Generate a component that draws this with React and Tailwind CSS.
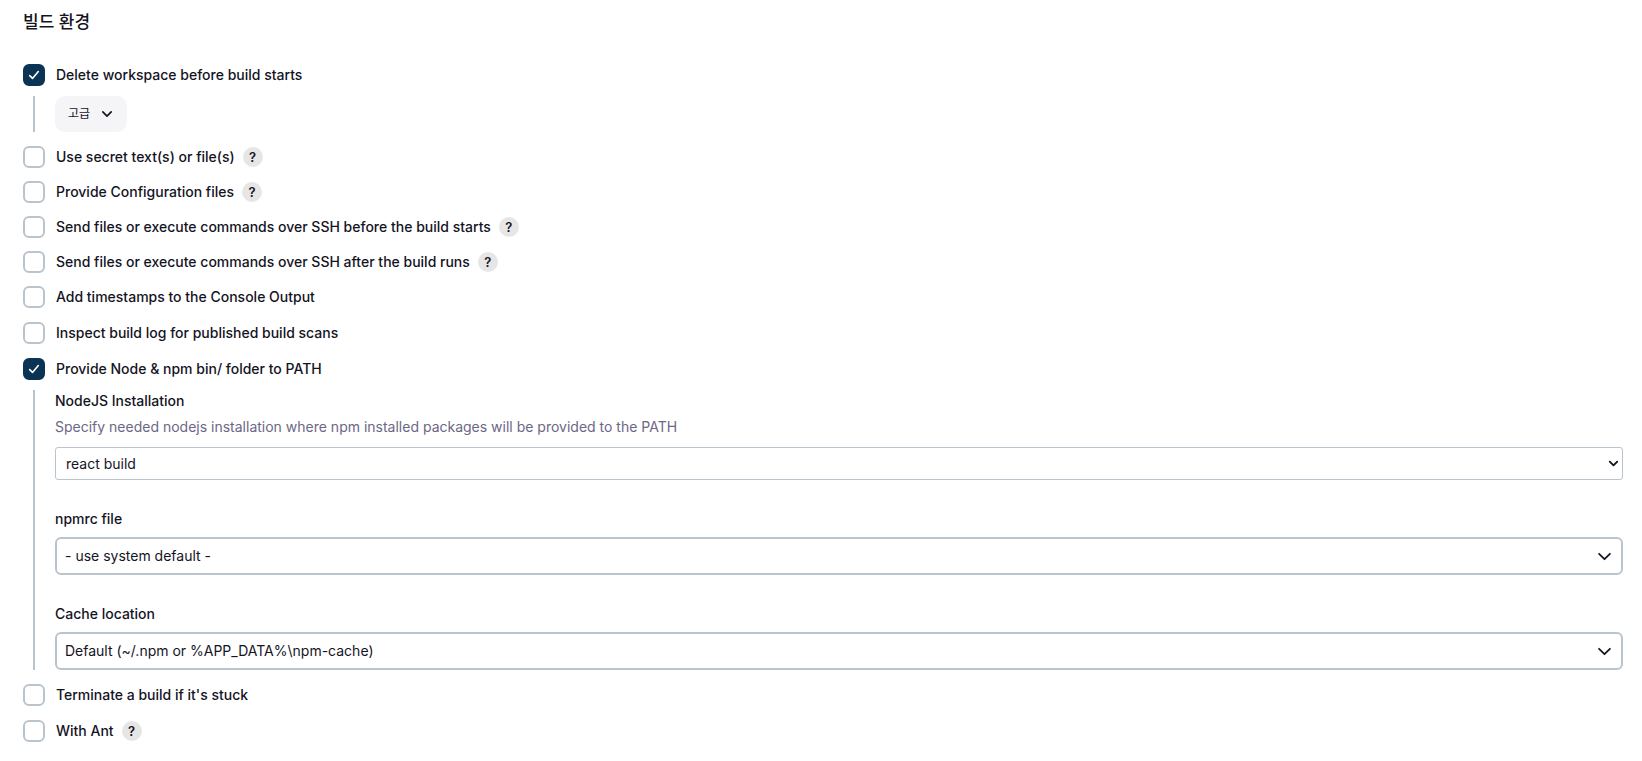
import React, { useState } from 'react';

const FONT = "font-['Inter','Noto_Sans_CJK_KR',sans-serif]";

// Options listed under the build environment section
const initialOptions = [
    { id: 'delete-workspace', label: 'Delete workspace before build starts', checked: true },
    { id: 'secret-text', label: 'Use secret text(s) or file(s)', help: true },
    { id: 'config-files', label: 'Provide Configuration files', help: true },
    { id: 'ssh-before', label: 'Send files or execute commands over SSH before the build starts', help: true },
    { id: 'ssh-after', label: 'Send files or execute commands over SSH after the build runs', help: true },
    { id: 'timestamps', label: 'Add timestamps to the Console Output' },
    { id: 'build-scans', label: 'Inspect build log for published build scans' },
    { id: 'node-path', label: 'Provide Node & npm bin/ folder to PATH', checked: true },
    { id: 'terminate', label: "Terminate a build if it's stuck" },
    { id: 'with-ant', label: 'With Ant', help: true },
];

const Chevron = ({ className }) => (
    <svg className={className} viewBox="0 0 12 12" fill="none" stroke="currentColor" strokeLinecap="round" strokeLinejoin="round">
        <path d="M1 3.5l5 5 5-5" />
    </svg>
);

const OptionRow = ({ option, onToggle }) => (
    <div className={`flex items-center h-[22px] ${option.help ? 'mb-[13px]' : 'mb-3.5'}`}>
        <label htmlFor={option.id} className="flex items-center gap-[11px] font-medium cursor-pointer">
            <span className="grid size-[22px]">
                <input
                    id={option.id}
                    type="checkbox"
                    checked={!!option.checked}
                    onChange={() => onToggle(option.id)}
                    className="col-start-1 row-start-1 appearance-none size-[22px] rounded-md border-2 border-[#bac4cd] bg-white checked:border-[#0b3454] checked:bg-[#0b3454]"
                />
                {option.checked && (
                    <svg className="col-start-1 row-start-1 size-[22px] pointer-events-none" viewBox="0 0 22 22" fill="none" stroke="white" strokeWidth="1.6" strokeLinecap="round" strokeLinejoin="round">
                        <path d="M6.7 11.6l2.8 2.8 5.8-6.8" />
                    </svg>
                )}
            </span>
            {option.label}
        </label>
        {option.help && (
            <button type="button" aria-label={`Help for ${option.label}`} className="ml-2 flex items-center justify-center size-5 rounded-full bg-[#e6e6e6] text-[13px] font-semibold">
                ?
            </button>
        )}
    </div>
);

// Nested settings with the vertical guide line on the left
const NestedPanel = ({ children }) => (
    <div className="-mt-1 mb-3.5 ml-2.5 border-l-2 border-[#bac4cd] pl-5">{children}</div>
);

const SelectField = ({ id, label, description, value, native }) => (
    <div>
        <label htmlFor={id} className="block leading-5 font-medium">{label}</label>
        {description && <p className="mt-1.5 mb-2.5 leading-5 text-[#6c6786]">{description}</p>}
        <div className={`grid items-center ${native ? '' : 'mt-2'}`}>
            <select
                id={id}
                className={`col-start-1 row-start-1 w-full appearance-none border-[#bac4cd] bg-white ${native ? 'h-[33px] rounded-[3px] border px-2.5' : 'h-[38px] rounded-md border-2 px-2'}`}
            >
                <option>{value}</option>
            </select>
            <Chevron
                className={`col-start-1 row-start-1 justify-self-end pointer-events-none ${native ? 'mr-[5px] size-[9px] stroke-[2.5]' : 'mr-3 size-[13px] stroke-[1.6]'}`}
            />
        </div>
    </div>
);

const App = () => {
    const [options, setOptions] = useState(initialOptions);

    const handleToggle = (id) => {
        setOptions(options.map((option) => (option.id === id ? { ...option, checked: !option.checked } : option)));
    };

    return (
        <section className={`min-h-screen bg-white pt-2.5 pr-[19px] pl-[23px] text-sm text-[#14141f] ${FONT}`}>
            <h2 className="mb-[30px] text-[17px] leading-6 font-medium">빌드 환경</h2>

            {options.map((option) => (
                <React.Fragment key={option.id}>
                    <OptionRow option={option} onToggle={handleToggle} />

                    {option.id === 'delete-workspace' && option.checked && (
                        <NestedPanel>
                            <button type="button" className="flex items-center gap-3 h-9 rounded-[10px] bg-[#f5f5f8] pl-[13px] pr-[15px] text-xs font-normal">
                                고급
                                <Chevron className="size-2.5 stroke-2" />
                            </button>
                        </NestedPanel>
                    )}

                    {option.id === 'node-path' && option.checked && (
                        <NestedPanel>
                            <div className="flex flex-col gap-[29px] pt-px">
                                <SelectField
                                    id="nodejs"
                                    label="NodeJS Installation"
                                    description="Specify needed nodejs installation where npm installed packages will be provided to the PATH"
                                    value="react build"
                                    native
                                />
                                <SelectField id="npmrc" label="npmrc file" value="- use system default -" />
                                <SelectField id="cache" label="Cache location" value="Default (~/.npm or %APP_DATA%\npm-cache)" />
                            </div>
                        </NestedPanel>
                    )}
                </React.Fragment>
            ))}
        </section>
    );
};

export default App;
